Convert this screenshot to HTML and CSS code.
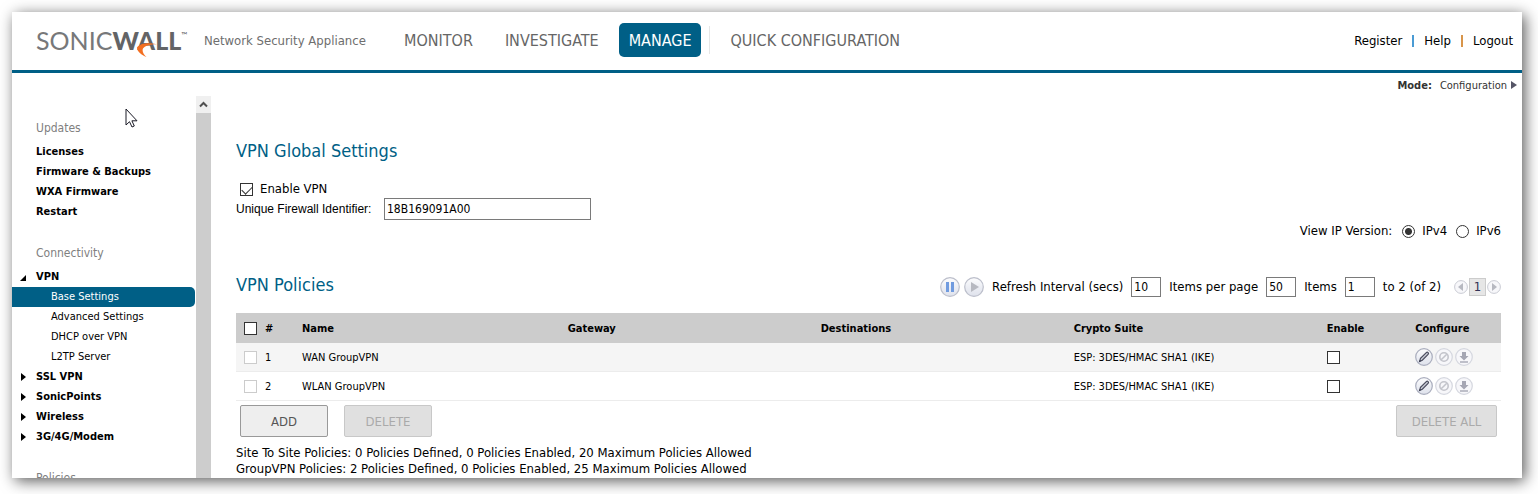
FILE: index.html
```
<!DOCTYPE html>
<html lang="en">
<head>
  <meta charset="UTF-8">
  <meta name="viewport" content="width=device-width, initial-scale=1.0">
  <title>SonicWall - Network Security Appliance</title>
  <link rel="stylesheet" href="styles.css">
</head>
<body>
  <!-- Shared icons -->
  <svg class="sprite" aria-hidden="true">
    <defs>
      <linearGradient id="ball" x1="0" y1="0" x2="0" y2="1">
        <stop offset="0" stop-color="#fdfdfe"/>
        <stop offset="0.5" stop-color="#eceef4"/>
        <stop offset="1" stop-color="#dfe2ec"/>
      </linearGradient>
      <symbol id="icon-edit" viewBox="0 0 18 18">
        <circle cx="9" cy="9" r="8.3" fill="url(#ball)" stroke="#a9adbd" stroke-width="1.2"/>
        <path d="M4.6 13.4l.9-3 5.800-5.800c.6-.6 1.300-.5 1.800 0s.6 1.200 0 1.800l-5.800 5.800z" fill="#c9ccd6" stroke="#4a4c5e" stroke-width="1.200"/>
        <path d="M4.200 13.800l1.800-.5-1.300-1.300z" fill="#33354a"/>
      </symbol>
      <symbol id="icon-delete" viewBox="0 0 18 18">
        <circle cx="9" cy="9" r="8.3" fill="#f7f7fa" stroke="#d5d7df" stroke-width="1.2"/>
        <circle cx="9" cy="9" r="4.200" fill="none" stroke="#c3c4cb" stroke-width="1.600"/>
        <path d="M6.200 11.800l5.600-5.600" stroke="#c3c4cb" stroke-width="1.600"/>
      </symbol>
      <symbol id="icon-export" viewBox="0 0 18 18">
        <circle cx="9" cy="9" r="8.3" fill="#f7f7fa" stroke="#d5d7df" stroke-width="1.2"/>
        <path d="M7 4h4v4h2.500L9 12.500 4.500 8H7z" fill="#a5a6b3"/>
        <path d="M5 14h8" stroke="#a5a6b3" stroke-width="1.400"/>
      </symbol>
    </defs>
  </svg>

  <div class="window">
    <header class="topbar">
      <a href="#" class="logo" aria-label="SonicWall">
        <span class="logo-thin">SONIC</span><span class="logo-bold">WALL</span><sup>™</sup>
        <svg class="swoosh" viewBox="0 0 20 14" aria-hidden="true">
          <path d="M0 4.500C3 .2 11-.8 20 1.200 13 1.200 7.500 3 6 5.500 4.800 8 6.500 11.500 9.500 14 4.500 12 0 8.500 0 4.500z" fill="#f36f21"/>
        </svg>
      </a>
      <span class="tagline">Network Security Appliance</span>
      <nav class="main-nav">
        <a href="#">MONITOR</a>
        <a href="#">INVESTIGATE</a>
        <a href="#" class="active">MANAGE</a>
        <span class="divider"></span>
        <a href="#">QUICK CONFIGURATION</a>
      </nav>
      <div class="user-links">
        <a href="#">Register</a>
        <span class="bar blue"></span>
        <a href="#">Help</a>
        <span class="bar orange"></span>
        <a href="#">Logout</a>
      </div>
    </header>

    <div class="mode"><b>Mode:</b> <a href="#">Configuration</a><span class="mode-arrow"></span></div>

    <div class="layout">
      <aside class="sidebar">
        <h3>Updates</h3>
        <ul>
          <li><a href="#">Licenses</a></li>
          <li><a href="#">Firmware &amp; Backups</a></li>
          <li><a href="#">WXA Firmware</a></li>
          <li><a href="#">Restart</a></li>
        </ul>
        <h3>Connectivity</h3>
        <ul>
          <li class="open"><a href="#">VPN</a>
            <ul class="submenu">
              <li><a href="#" class="selected">Base Settings</a></li>
              <li><a href="#">Advanced Settings</a></li>
              <li><a href="#">DHCP over VPN</a></li>
              <li><a href="#">L2TP Server</a></li>
            </ul>
          </li>
          <li class="closed"><a href="#">SSL VPN</a></li>
          <li class="closed"><a href="#">SonicPoints</a></li>
          <li class="closed"><a href="#">Wireless</a></li>
          <li class="closed"><a href="#">3G/4G/Modem</a></li>
        </ul>
        <h3>Policies</h3>
      </aside>
      <div class="scrollbar">
        <svg viewBox="0 0 15 17" aria-hidden="true"><path d="M4 10.500l3.500-3.500 3.500 3.500" fill="none" stroke="#505050" stroke-width="2"/></svg>
      </div>

      <main>
        <h2>VPN Global Settings</h2>
        <div class="check-row">
          <input type="checkbox" id="enable-vpn" checked>
          <label for="enable-vpn">Enable VPN</label>
        </div>
        <div class="id-row">
          <label for="firewall-id">Unique Firewall Identifier:</label>
          <input type="text" id="firewall-id" value="18B169091A00">
        </div>

        <div class="ip-version">
          <span>View IP Version:</span>
          <input type="radio" name="ip" id="ipv4" checked><label for="ipv4">IPv4</label>
          <input type="radio" name="ip" id="ipv6"><label for="ipv6">IPv6</label>
        </div>

        <div class="policies-head">
          <h2>VPN Policies</h2>
          <div class="toolbar">
            <button class="icon-btn" aria-label="Pause">
              <svg width="20" height="20" viewBox="0 0 20 20"><circle cx="10" cy="10" r="9.300" fill="url(#ball)" stroke="#bcbfcb" stroke-width="1.200"/><path d="M6 5h3v10H6zM11 5h3v10h-3z" fill="#709bdf"/></svg>
            </button>
            <button class="icon-btn" aria-label="Play">
              <svg width="20" height="20" viewBox="0 0 20 20"><circle cx="10" cy="10" r="9.300" fill="url(#ball)" stroke="#bcbfcb" stroke-width="1.200"/><path d="M7 5l8 5-8 5z" fill="#b7b9c1"/></svg>
            </button>
            <label for="refresh">Refresh Interval (secs)</label>
            <input type="text" id="refresh" value="10">
            <label for="per-page">Items per page</label>
            <input type="text" id="per-page" value="50">
            <label for="items">Items</label>
            <input type="text" id="items" value="1">
            <span>to 2 (of 2)</span>
            <div class="pager">
              <button class="icon-btn" aria-label="Previous page">
                <svg width="14" height="14" viewBox="0 0 14 14"><circle cx="7" cy="7" r="6.400" fill="#f7f7fa" stroke="#c9cbd3"/><path d="M9 3v8L4 7z" fill="#b7b9c1"/></svg>
              </button>
              <span class="page">1</span>
              <button class="icon-btn" aria-label="Next page">
                <svg width="14" height="14" viewBox="0 0 14 14"><circle cx="7" cy="7" r="6.400" fill="#f7f7fa" stroke="#c9cbd3"/><path d="M5 3v8l5-4z" fill="#b7b9c1"/></svg>
              </button>
            </div>
          </div>
        </div>

        <table>
          <thead>
            <tr>
              <th class="col-check"><input type="checkbox" aria-label="Select all"></th>
              <th class="col-num">#</th>
              <th class="col-name">Name</th>
              <th class="col-wide">Gateway</th>
              <th class="col-wide">Destinations</th>
              <th class="col-wide">Crypto Suite</th>
              <th class="col-enable">Enable</th>
              <th>Configure</th>
            </tr>
          </thead>
          <tbody>
            <tr>
              <td><input type="checkbox" aria-label="Select WAN GroupVPN" disabled></td>
              <td>1</td>
              <td>WAN GroupVPN</td>
              <td></td>
              <td></td>
              <td>ESP: 3DES/HMAC SHA1 (IKE)</td>
              <td><input type="checkbox" aria-label="Enable WAN GroupVPN"></td>
              <td>
                <div class="actions">
                  <button class="icon-btn" aria-label="Edit"><svg width="18" height="18"><use href="#icon-edit"/></svg></button>
                  <button class="icon-btn" aria-label="Delete" disabled><svg width="18" height="18"><use href="#icon-delete"/></svg></button>
                  <button class="icon-btn" aria-label="Export"><svg width="18" height="18"><use href="#icon-export"/></svg></button>
                </div>
              </td>
            </tr>
            <tr>
              <td><input type="checkbox" aria-label="Select WLAN GroupVPN" disabled></td>
              <td>2</td>
              <td>WLAN GroupVPN</td>
              <td></td>
              <td></td>
              <td>ESP: 3DES/HMAC SHA1 (IKE)</td>
              <td><input type="checkbox" aria-label="Enable WLAN GroupVPN"></td>
              <td>
                <div class="actions">
                  <button class="icon-btn" aria-label="Edit"><svg width="18" height="18"><use href="#icon-edit"/></svg></button>
                  <button class="icon-btn" aria-label="Delete" disabled><svg width="18" height="18"><use href="#icon-delete"/></svg></button>
                  <button class="icon-btn" aria-label="Export"><svg width="18" height="18"><use href="#icon-export"/></svg></button>
                </div>
              </td>
            </tr>
          </tbody>
        </table>

        <div class="buttons">
          <button class="btn">ADD</button>
          <button class="btn" disabled>DELETE</button>
          <button class="btn delete-all" disabled>DELETE ALL</button>
        </div>

        <p>Site To Site Policies: 0 Policies Defined, 0 Policies Enabled, 20 Maximum Policies Allowed</p>
        <p>GroupVPN Policies: 2 Policies Defined, 0 Policies Enabled, 25 Maximum Policies Allowed</p>
      </main>
    </div>

    <svg class="cursor" viewBox="0 0 13 20" aria-hidden="true"><path d="M1 1v16l3.500-3.300 2.500 5.300 2.300-1-2.400-5.200H12z" fill="#fff" stroke="#1a1a26"/></svg>
  </div>
</body>
</html>
```
FILE: styles.css
```
* {
  box-sizing: border-box;
}

body {
  margin: 0;
  padding: 12px 16px 16px 12px;
  background-color: #fff;
  color: #000;
  font-family: "DejaVu Sans Condensed", "Noto Sans", sans-serif;
  font-size: 13px;
}

a {
  color: inherit;
  text-decoration: none;
}

.sprite {
  position: absolute;
  width: 0;
  height: 0;
}

.window {
  position: relative;
  display: flex;
  flex-direction: column;
  height: calc(100vh - 28px);
  overflow: hidden;
  background-color: #fff;
  box-shadow: 3px 3px 14px rgba(0, 0, 0, 0.65);
}

/* Header */
.topbar {
  display: flex;
  align-items: center;
  flex: none;
  height: 61px;
  padding: 0 9px 3px 24px;
  border-bottom: 3px solid #005f86;
}

.logo {
  position: relative;
  display: flex;
  width: 168px;
  color: #636466;
  font-family: Lato, sans-serif;
  font-size: 25px;
  line-height: 30px;
}

.logo-thin {
  color: #77787a;
  font-weight: 400;
}

.logo-bold {
  font-weight: 900;
}

.logo sup {
  font-size: 8px;
  line-height: 20px;
}

.swoosh {
  position: absolute;
  left: 101px;
  top: 18px;
  width: 20px;
  height: 14px;
}

.tagline {
  width: 188px;
  padding-top: 2px;
  color: #6e6e6e;
}

.main-nav {
  display: flex;
  align-items: center;
  gap: 8px;
  color: #666;
  font-size: 16px;
  white-space: nowrap;
}

.main-nav a {
  padding: 2px 12px 0;
  line-height: 32px;
  border-radius: 5px;
}

.main-nav .active {
  padding: 2px 10px 0;
  background-color: #005f86;
  color: #fff;
}

.divider {
  width: 1px;
  height: 28px;
  background-color: #e6e6e6;
}

.user-links {
  display: flex;
  align-items: center;
  gap: 10px;
  margin-left: auto;
  padding-top: 2px;
}

.bar {
  width: 2px;
  height: 12px;
}

.blue {
  background-color: #4a9bd4;
}

.orange {
  background-color: #d8954a;
}

.mode {
  display: flex;
  flex: none;
  align-items: center;
  justify-content: flex-end;
  gap: 8px;
  height: 23px;
  padding: 1px 5px 0 0;
  color: #333;
  font-size: 11px;
}

.mode-arrow {
  margin-left: -4px;
  border: 4px solid transparent;
  border-left: 6px solid #556;
  border-right: 0;
}

.layout {
  display: flex;
  flex: 1;
  min-height: 0;
}

/* Left menu */
.sidebar {
  flex: none;
  width: 184px;
  padding-top: 1px;
  overflow: hidden;
  font-size: 11px;
  line-height: 20px;
}

.sidebar h3 {
  margin: 21px 0 4px 24px;
  color: #808080;
  font-size: 12px;
  font-weight: normal;
}

.sidebar ul {
  margin: 0;
  padding: 0;
  list-style: none;
}

.sidebar li {
  position: relative;
}

.sidebar a {
  display: block;
  padding-left: 24px;
  font-weight: bold;
}

.sidebar .submenu a {
  margin-right: 1px;
  padding-left: 39px;
  font-weight: normal;
}

.sidebar .submenu .selected {
  background-color: #005f86;
  border-radius: 0 5px 5px 0;
  color: #fff;
}

.open::before {
  content: "";
  position: absolute;
  left: 8px;
  top: 8px;
  border-left: 6px solid transparent;
  border-bottom: 6px solid #000;
}

.closed::before {
  content: "";
  position: absolute;
  left: 9px;
  top: 6px;
  border: 4px solid transparent;
  border-left: 5px solid #000;
  border-right: 0;
}

.scrollbar {
  flex: none;
  width: 15px;
  background-color: #cdcdcd;
}

.scrollbar svg {
  display: block;
  height: 17px;
  background-color: #f0f0f0;
}

/* Content */
main {
  flex: 1;
  min-width: 0;
  padding: 43px 21px 0 25px;
}

h2 {
  margin: 0;
  color: #005f86;
  font-size: 18px;
  font-weight: normal;
  line-height: 24px;
}

input {
  margin: 0;
  font: inherit;
}

input[type="text"] {
  border: 1px solid #7a7a7a;
  background-color: #fff;
  color: #000;
  font-size: 12px;
}

input[type="checkbox"],
input[type="radio"] {
  display: block;
  flex: none;
  width: 13px;
  height: 13px;
  appearance: none;
  border: 1px solid #333;
  background-color: #fff;
}

input[type="radio"] {
  border-radius: 50%;
}

input[type="radio"]:checked {
  background: radial-gradient(circle, #333 3px, #fff 4px);
}

input[type="checkbox"]:disabled {
  border-color: #ccc;
}

input[type="checkbox"]:checked::before {
  content: "";
  display: block;
  width: 9px;
  height: 5px;
  margin: 2px 1px;
  border: solid #333;
  border-width: 0 0 1px 1px;
  transform: rotate(-45deg);
}

.check-row {
  display: flex;
  align-items: center;
  gap: 7px;
  margin-top: 17px;
  padding-left: 4px;
  line-height: 18px;
}

.id-row {
  display: flex;
  align-items: center;
  font-family: "Liberation Sans", Arial, sans-serif;
  font-size: 12px;
}

.id-row label {
  width: 148px;
}

.id-row input {
  width: 207px;
  height: 22px;
  padding: 1px 2px;
  font-family: "DejaVu Sans Condensed", "Noto Sans", sans-serif;
}

.ip-version {
  display: flex;
  align-items: center;
  justify-content: flex-end;
  gap: 7px;
  margin-top: 2px;
  line-height: 18px;
}

.ip-version span {
  margin-right: 3px;
}

.ip-version #ipv6 {
  margin-left: 2px;
}

.policies-head {
  display: flex;
  align-items: center;
  justify-content: space-between;
  margin-top: 33px;
}

.toolbar {
  display: flex;
  align-items: center;
  gap: 8px;
  padding-top: 3px;
}

.toolbar input {
  width: 30px;
  height: 20px;
  padding: 1px 2px 0;
}

.toolbar .icon-btn + .icon-btn {
  margin-left: -4px;
}

.icon-btn {
  display: block;
  padding: 0;
  border: 0;
  background: none;
}

.icon-btn svg {
  display: block;
}

.pager {
  display: flex;
  align-items: center;
  gap: 1px;
  margin-left: 5px;
}

.page {
  width: 17px;
  border: 1px solid #ccc;
  background-color: #e6e6e6;
  color: #333355;
  line-height: 16px;
  text-align: center;
}

/* Policies table */
table {
  width: 100%;
  margin-top: 16px;
  border-collapse: separate;
  border-spacing: 0;
  table-layout: fixed;
  font-size: 11px;
}

th,
td {
  height: 29px;
  padding: 0;
  border-bottom: 1px solid #ececec;
  text-align: left;
  white-space: nowrap;
}

th {
  height: 30px;
  border-bottom: 0;
  background-color: #ccc;
}

tbody tr:first-child {
  background-color: #f5f5f5;
}

th:first-child,
td:first-child {
  padding-left: 8px;
}

.col-check {
  width: 29px;
}

.col-num {
  width: 37px;
}

.col-name {
  width: 21%;
}

.col-wide {
  width: 20%;
}

.col-enable {
  width: 7%;
}

.actions {
  display: flex;
  gap: 2px;
}

.buttons {
  display: flex;
  gap: 16px;
  padding: 4px 4px 8px;
}

.btn {
  width: 88px;
  height: 32px;
  border: 1px solid #999;
  border-radius: 2px;
  background-color: #eee;
  color: #555;
  font-family: inherit;
  font-size: 13px;
}

.btn:disabled {
  border-color: #c8c8c8;
  background-color: #e0e0e0;
  color: #aaa;
}

.delete-all {
  width: 101px;
  margin-left: auto;
}

p {
  margin: 0;
  line-height: 16px;
}

.cursor {
  position: absolute;
  left: 113px;
  top: 96px;
  width: 13px;
  height: 20px;
}
```
